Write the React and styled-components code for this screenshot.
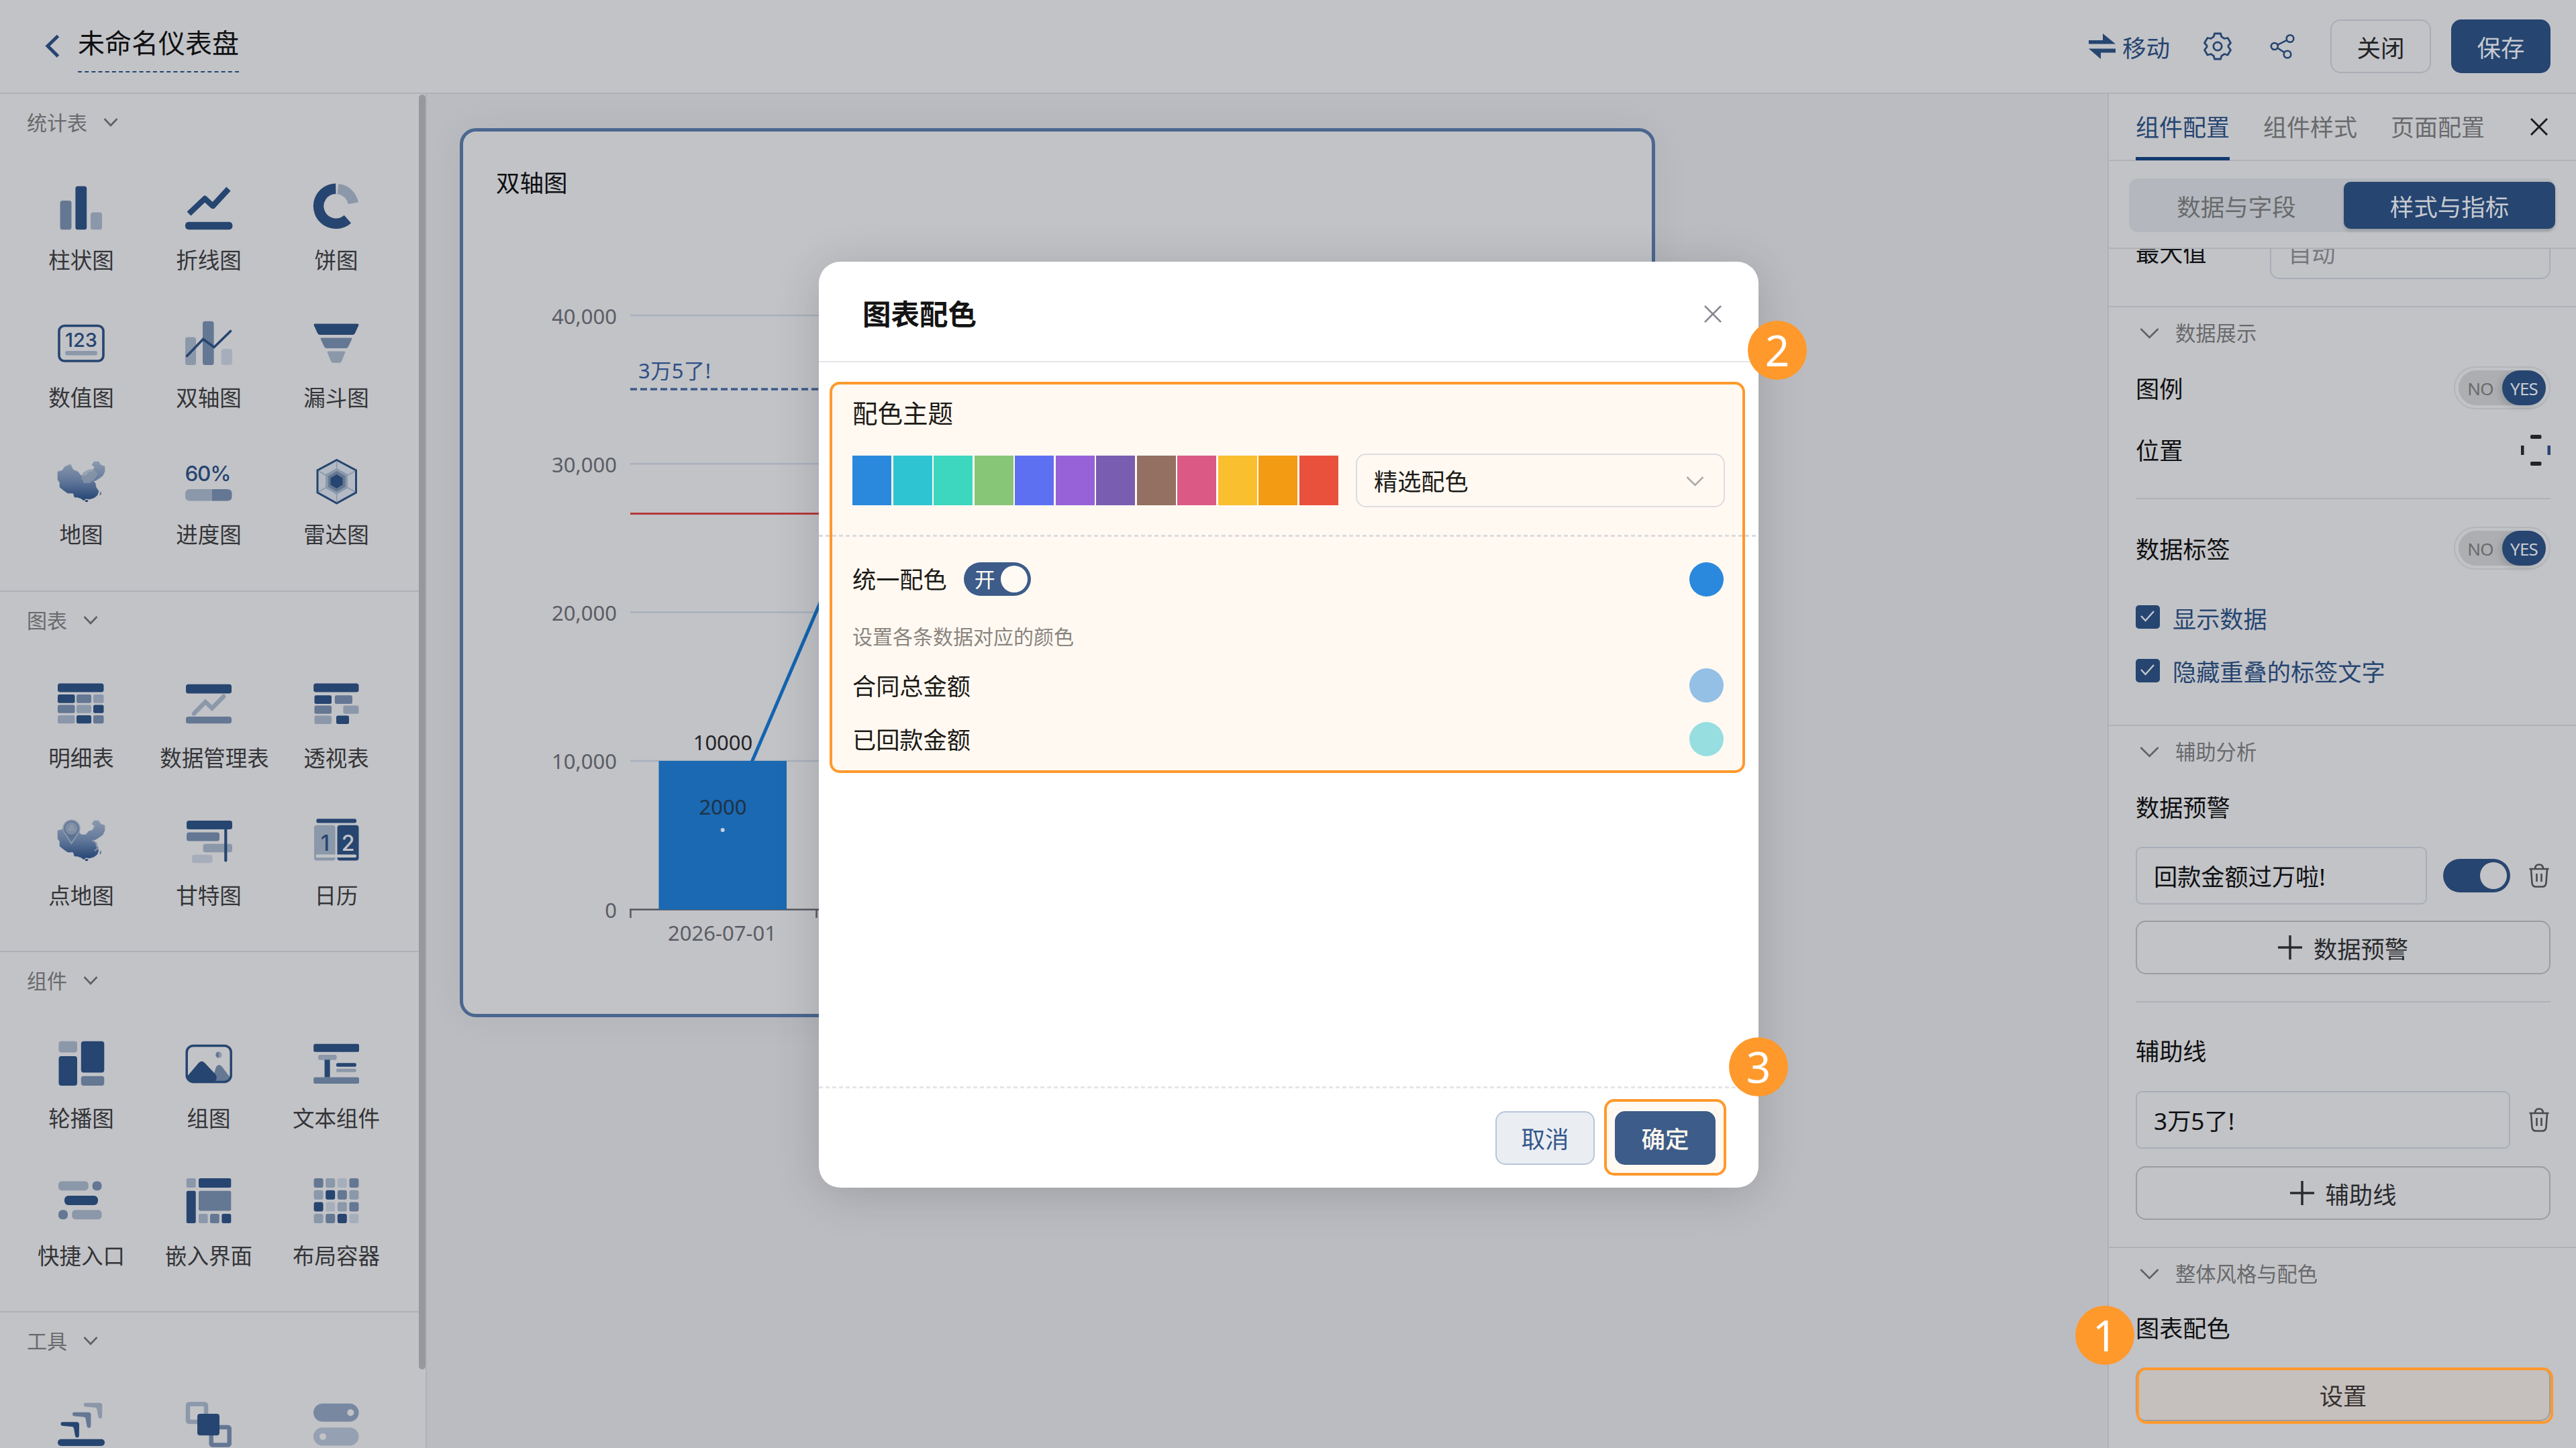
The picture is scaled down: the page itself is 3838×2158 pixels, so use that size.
import React from "react";
import styled, { createGlobalStyle } from "styled-components";

const c = {
  panel: "#c2c3c7",
  canvas: "#bbbcc1",
  line: "#b0b1b6",
  navy: "#264570",
  mid: "#647793",
  light: "#8b98aa",
  faint: "#a7aebb",
  text: "#0f1012",
  label: "#343538",
  muted: "#696a6c",
  orange: "#ff992c",
  primary: "#3d5c89",
};

const Global = createGlobalStyle`
  html, body { margin: 0; padding: 0; }
  body {
    width: 3838px;
    height: 2158px;
    overflow: hidden;
    background: ${c.canvas};
    font-family: "Noto Sans", "Noto Sans CJK SC", sans-serif;
    color: ${c.text};
  }
  *, *::before, *::after { box-sizing: border-box; }
  svg { display: block; flex: none; }
`;

/* ---------- shell ---------- */

const Page = styled.div`
  position: relative;
  width: 3838px;
  height: 2158px;
  display: flex;
  flex-direction: column;
  overflow: hidden;
`;

const TopBar = styled.header`
  height: 140px;
  flex: none;
  display: flex;
  align-items: center;
  padding: 0 38px 0 67px;
  background: ${c.panel};
  border-bottom: 2px solid ${c.line};
`;

const DashTitle = styled.div`
  margin-left: 27px;
  margin-bottom: 9px;
  height: 86px;
  font-size: 40px;
  line-height: 84px;
  border-bottom: 2px dashed ${c.navy};
`;

const DashTitleText = styled.span`
  display: block;
`;

const TopActions = styled.div`
  margin-left: auto;
  display: flex;
  align-items: center;
`;

const MoveLink = styled.div`
  display: flex;
  align-items: center;
  gap: 10px;
  margin-right: 50px;
  font-size: 35.500px;
  line-height: 44px;
  color: ${c.navy};
  span { padding-top: 3px; }
`;

const IconSlot = styled.div`
  margin-right: ${(p) => p.$gap}px;
`;

const TopButton = styled.div`
  width: ${(p) => p.$w}px;
  height: 80px;
  margin-left: ${(p) => p.$ml || 0}px;
  padding-top: 4px;
  display: flex;
  align-items: center;
  justify-content: center;
  border-radius: 15px;
  font-size: 35.500px;
  line-height: 44px;
  color: ${(p) => (p.$solid ? "#c6cad1" : "#222326")};
  background: ${(p) => (p.$solid ? c.navy : "transparent")};
  border: 2px solid ${(p) => (p.$solid ? c.navy : "#a9adb5")};
`;

const Main = styled.div`
  flex: 1;
  min-height: 0;
  display: flex;
`;

/* ---------- left library ---------- */

const Library = styled.aside`
  width: 636px;
  flex: none;
  display: flex;
  background: ${c.panel};
  border-right: 2px solid ${c.line};
  overflow: hidden;
`;

const LibraryList = styled.div`
  width: 624px;
  flex: none;
`;

const ScrollThumb = styled.div`
  width: 10px;
  height: 1900px;
  margin-top: 1px;
  border-radius: 5px;
  background: #97989c;
`;

const LibSection = styled.section`
  height: ${(p) => p.$h}px;
  overflow: hidden;
  border-top: ${(p) => (p.$first ? "0" : `2px solid ${c.line}`)};
`;

const LibHead = styled.div`
  height: 91px;
  padding: 0 0 6px 40px;
  display: flex;
  align-items: center;
  gap: 24px;
  font-size: 30px;
  line-height: 36px;
  color: ${c.muted};
`;

const LibGrid = styled.div`
  display: grid;
  grid-template-columns: repeat(3, 190px);
  grid-auto-rows: 204.5px;
  padding-left: 26px;
`;

const LibItem = styled.div`
  display: flex;
  flex-direction: column;
  align-items: center;
  padding-top: 38px;
  gap: 19px;
  font-size: 32.5px;
  line-height: 40px;
  color: ${c.label};
  white-space: nowrap;
`;

const LibLabel = styled.span`
  margin-left: ${(p) => (p.$long ? 17 : 0)}px;
`;

/* ---------- canvas ---------- */

const Canvas = styled.main`
  flex: 1;
  min-width: 0;
  padding: 51px 0 0 49px;
`;

const ChartCard = styled.div`
  width: 1781px;
  height: 1325px;
  border: 5px solid #4a678f;
  border-radius: 24px;
  background: ${c.panel};
  box-shadow: 0 0 60px rgba(0, 0, 0, 0.05);
`;

const ChartTitle = styled.div`
  padding: 54px 0 0 49px;
  height: 100px;
  font-size: 35.500px;
  line-height: 44px;
`;

/* ---------- right panel ---------- */

const Panel = styled.aside`
  width: 698px;
  flex: none;
  display: flex;
  flex-direction: column;
  background: ${c.panel};
  border-left: 2px solid ${c.line};
  overflow: hidden;
`;

const Tabs = styled.div`
  height: 100px;
  flex: none;
  display: flex;
  align-items: stretch;
  gap: 50px;
  padding: 0 42px 0 40px;
  border-bottom: 2px solid ${c.line};
`;

const Tab = styled.div`
  height: 99px;
  padding-top: 28px;
  font-size: 35px;
  line-height: 44px;
  white-space: nowrap;
  color: ${(p) => (p.$on ? c.navy : c.muted)};
  border-bottom: 5px solid ${(p) => (p.$on ? "#123a6e" : "transparent")};
`;

const TabClose = styled.div`
  margin-left: auto;
  display: flex;
  align-items: center;
`;

const SegmentWrap = styled.div`
  height: 131px;
  flex: none;
  padding: 26px 31px 0 30px;
  border-bottom: 2px solid ${c.line};
`;

const Segment = styled.div`
  height: 80px;
  display: flex;
  align-items: center;
  border-radius: 14px;
  background: #b4b8be;
`;

const SegmentItem = styled.div`
  width: ${(p) => (p.$on ? 315 : 320)}px;
  height: 70px;
  margin-top: -1px;
  padding-top: 4px;
  display: flex;
  align-items: center;
  justify-content: center;
  font-size: 35.500px;
  line-height: 44px;
  border-radius: 10px;
  color: ${(p) => (p.$on ? "#c6cad1" : c.muted)};
  background: ${(p) => (p.$on ? c.navy : "transparent")};
  box-shadow: ${(p) => (p.$on ? "0 3px 5px rgba(0,0,0,.16)" : "none")};
`;

const PanelBody = styled.div`
  flex: 1;
  min-height: 0;
  overflow: hidden;
  padding: 0 38px 0 40px;
`;

const Row = styled.div`
  display: flex;
  align-items: center;
  justify-content: ${(p) => p.$justify || "space-between"};
  height: ${(p) => p.$h}px;
  margin-top: ${(p) => p.$mt || 0}px;
  gap: ${(p) => p.$gap || 0}px;
  font-size: 35.200px;
  line-height: 40px;
`;

const RowText = styled.span`
  padding-top: ${(p) => p.$drop || 0}px;
  color: ${(p) => p.$color || c.text};
`;

const Rule = styled.div`
  height: 2px;
  margin: ${(p) => p.$mt}px ${(p) => (p.$full ? "-38px" : 0)} 0 ${(p) => (p.$full ? "-40px" : 0)};
  background: ${c.line};
`;

const GroupTitle = styled.div`
  height: 78px;
  padding-left: 6px;
  display: flex;
  align-items: center;
  gap: 24px;
  font-size: 30.300px;
  line-height: 36px;
  color: ${c.muted};
`;

const Field = styled.div`
  width: ${(p) => p.$w}px;
  height: ${(p) => p.$h || 86}px;
  display: flex;
  align-items: center;
  padding: 2px 26px 0 25px;
  border: 2px solid #a8aeb7;
  border-radius: ${(p) => p.$r || 9}px;
  color: ${(p) => p.$color || c.text};
`;

const GhostButton = styled.div`
  height: 80px;
  margin-top: ${(p) => p.$mt}px;
  display: flex;
  align-items: center;
  justify-content: center;
  gap: 17px;
  border: 2px solid #9c9da1;
  border-radius: 15px;
  font-size: 35.300px;
  line-height: 40px;
  color: #2a2b2e;
  span { padding-top: 4px; }
`;

const YesNo = styled.div`
  width: 144px;
  height: 64px;
  padding: 4px 5px;
  border: 2px solid #b4b5b9;
  border-radius: 32px;
`;

const YesNoTrack = styled.div`
  height: 52px;
  display: flex;
  align-items: center;
  border-radius: 26px;
  background: #adaeb2;
  font-size: 26px;
  line-height: 30px;
  letter-spacing: -0.8px;
  color: ${c.muted};
`;

const YesNoItem = styled.div`
  width: 66px;
  height: 52px;
  padding-top: 2px;
  display: flex;
  align-items: center;
  justify-content: center;
  border-radius: 26px;
  color: ${(p) => (p.$on ? "#c6cad1" : c.muted)};
  background: ${(p) => (p.$on ? c.navy : "transparent")};
  box-shadow: ${(p) => (p.$on ? "-4px 3px 10px rgba(0,0,0,.12)" : "none")};
`;

const CheckBox = styled.div`
  width: 36px;
  height: 35px;
  display: flex;
  align-items: center;
  justify-content: center;
  border-radius: 5px;
  background: ${c.navy};
`;

const Switch = styled.div`
  width: 100px;
  height: 50px;
  margin-right: ${(p) => p.$mr || 0}px;
  display: flex;
  align-items: center;
  justify-content: flex-end;
  gap: 8px;
  padding-right: 5px;
  border-radius: 25px;
  background: ${(p) => p.$bg};
  color: #fffaf3;
  font-size: 31px;
  line-height: 40px;
`;

const Knob = styled.i`
  width: 40px;
  height: 40px;
  border-radius: 50%;
  background: ${(p) => p.$bg};
`;

/* ---------- dialog ---------- */

const Dialog = styled.div`
  position: absolute;
  z-index: 0;
  left: 1220px;
  top: 390px;
  width: 1400px;
  height: 1380px;
  display: flex;
  flex-direction: column;
  border-radius: 32px;
  background: #fff;
  box-shadow: 0 10px 70px rgba(0, 0, 0, 0.16);
`;

const DialogHead = styled.div`
  height: 150px;
  display: flex;
  align-items: center;
  justify-content: space-between;
  padding: 8px 55px 0 65px;
  border-bottom: 2px solid #e4e5e7;
  font-size: 42.5px;
  font-weight: 700;
  line-height: 50px;
  color: #141414;
`;

const DialogSection = styled.div`
  padding: 0 50px;
  color: #1d1a16;
`;

const Heading = styled.div`
  padding-top: 56px;
  font-size: 37.5px;
  line-height: 40px;
`;

const Dashes = styled.div`
  height: 3px;
  margin-top: ${(p) => p.$mt}px;
  background: repeating-linear-gradient(90deg, ${(p) => p.$color} 0 6px, transparent 6px 10px);
`;

const Palette = styled.div`
  width: 724px;
  height: 74px;
  display: grid;
  grid-template-columns: repeat(12, 1fr);
  gap: 2.4px;
`;

const Swatch = styled.i`
  background: ${(p) => p.$bg};
`;

const Select = styled.div`
  width: 550px;
  height: 80px;
  display: flex;
  align-items: center;
  justify-content: space-between;
  padding: 2px 29px 0 25px;
  border: 2px solid #dcdcde;
  border-radius: 15px;
`;

const Hint = styled.div`
  margin-top: 46px;
  font-size: 30px;
  line-height: 30px;
  color: #8a857f;
`;

const Dot = styled.i`
  width: 51px;
  height: 51px;
  margin: 0 2px 0 auto;
  border-radius: 50%;
  background: ${(p) => p.$bg};
`;

const DialogFoot = styled.div`
  margin-top: auto;
  height: 151px;
`;

const FootButtons = styled.div`
  display: flex;
  justify-content: flex-end;
  gap: 30px;
  padding: 34px 64px 0 0;
`;

const FootButton = styled.div`
  width: ${(p) => (p.$solid ? 150 : 148)}px;
  height: 80px;
  padding-top: 2px;
  display: flex;
  align-items: center;
  justify-content: center;
  border-radius: 15px;
  font-size: 35.500px;
  line-height: 40px;
  font-weight: ${(p) => (p.$solid ? 500 : 400)};
  color: ${(p) => (p.$solid ? "#fff8ee" : "#34578a")};
  background: ${(p) => (p.$solid ? c.primary : "#eaeef3")};
  border: 2px solid ${(p) => (p.$solid ? c.primary : "#b8c6da")};
`;

/* ---------- walkthrough markers ---------- */

const Frame = styled.div`
  position: absolute;
  left: ${(p) => p.$x}px;
  top: ${(p) => p.$y}px;
  width: ${(p) => p.$w}px;
  height: ${(p) => p.$h}px;
  border: 4px solid ${c.orange};
  border-radius: 15px;
  background: ${(p) => (p.$tint ? "rgba(255, 153, 44, 0.06)" : "transparent")};
`;

const Tint = styled.div`
  position: absolute;
  z-index: -1;
  left: ${(p) => p.$x}px;
  top: ${(p) => p.$y}px;
  width: ${(p) => p.$w}px;
  height: ${(p) => p.$h}px;
  border-radius: 15px;
  background: #fff9f2;
`;

const Step = styled.div`
  position: absolute;
  left: ${(p) => p.$x}px;
  top: ${(p) => p.$y}px;
  width: 88px;
  height: 88px;
  display: flex;
  align-items: center;
  justify-content: center;
  border-radius: 50%;
  background: ${c.orange};
  color: #fff;
  font-size: 64px;
  line-height: 88px;
`;

/* ---------- icons ---------- */

const R = ({ x, y, x2, y2, f, r = 3.5 }) => (
  <rect x={x} y={y} width={x2 - x} height={y2 - y} rx={r} fill={f} />
);
const D = c.navy, M = c.mid, L = c.light, F = c.faint;

const Tile = ({ children }) => (
  <svg width="80" height="80" viewBox="0 0 80 80">{children}</svg>
);

const mapPath =
  "M5 25L12 23L15 18L19 16L24 14L28 22L35 25L40 31L47 31L51 26L57 24L60 18L56 15L59 10L66 10L69 15L75 17L75 25L72 31L68 34L62 38L58 39L61 42L62 48L66 54L64 60L59 64L52 66L47 65L44 68L40 65L34 63L30 63L28 57L20 57L14 53L8 48L8 41L5 37Z";

const ChinaMap = ({ id }) => (
  <>
    <defs>
      <linearGradient id={id} x1="0" y1="0" x2="0" y2="1">
        <stop offset="0" stopColor="#8b99ae" />
        <stop offset="0.5" stopColor="#61779a" />
        <stop offset="1" stopColor="#234472" />
      </linearGradient>
    </defs>
    <path d={mapPath} fill={`url(#${id})`} strokeLinejoin="round" stroke={`url(#${id})`} strokeWidth="0.6" />
    <ellipse cx="48" cy="68.6" rx="2.4" ry="1.6" fill={D} />
    <path d="M67.5 57l2-3 .6 4-2.4 3z" fill={M} />
  </>
);

const icons = {
  bar: <><R x={8.6} y={30} x2={25.5} y2={73.3} f={M} /><R x={31.4} y={8.5} x2={48.2} y2={73.3} f={D} /><R x={54} y={47.5} x2={71} y2={73.3} f={L} /></>,
  line: <><R x={5} y={61.7} x2={75.4} y2={73.3} f={D} r={5} /><path d="M10.500 49.500L34.200 27L46 38L69.500 12.500" fill="none" stroke={D} strokeWidth="8.5" strokeLinejoin="round" strokeLinecap="butt" /></>,
  pie: <><path d="M39.3 12.2A26 26 0 1 0 56.9 57.6" fill="none" stroke={D} strokeWidth="15.5" /><path d="M42.4 12.6A26 26 0 0 1 65.2 33.8" fill="none" stroke={L} strokeWidth="15.5" /></>,
  num: <><rect x="7" y="11.5" width="66" height="52.5" rx="8" fill="none" stroke={D} strokeWidth="3.6" /><text x="40" y="42.5" fontFamily="Inter, sans-serif" fontSize="29" fontWeight="500" fill={D} textAnchor="middle" textLength="48">123</text><R x={16} y={49} x2={64} y2={55.5} f={L} r={3} /></>,
  dual: <><R x={5} y={28.4} x2={21} y2={70} f={L} /><R x={31} y={4.8} x2={47.6} y2={70} f={M} /><R x={58.6} y={46} x2={75} y2={70} f={F} /><path d="M7.6 56.5L31.6 31.5L48 43.5L72.5 19.5" fill="none" stroke={D} strokeWidth="3.6" strokeLinecap="round" /></>,
  funnel: <><path d="M9 8.6H71Q74.5 8.6 73 11.5L68 22.5Q66.800 25 64 25H16Q13.200 25 12 22.500L7 11.500Q5.500 8.600 9 8.600Z" fill={D} /><path d="M19 29.500H61Q64.500 29.500 63 32L58 42.500Q56.800 45 54 45H26Q23.200 45 22 42.500L17 32Q15.500 29.500 19 29.500Z" fill={M} /><path d="M29 49.500H51Q54.500 49.500 53 52L48 64.500Q47 66.800 44.500 66.800H35.500Q33 66.800 32 64.500L27 52Q25.500 49.500 29 49.500Z" fill={L} /></>,
  map: <><ChinaMap id="map-a" /><path d="M42 27L50 22L58 21L65 28L60 36L53 42L44 42L40 34Z" fill={L} opacity="0.75" /></>,
  progress: <><text x="4.500" y="39" fontFamily="Inter, sans-serif" fontSize="31.500" fontWeight="500" fill={D} textLength="69">60%</text><path d="M12 51H45V68.500H12Q5 68.500 5 61.500V58Q5 51 12 51Z" fill={L} /><path d="M45 51H67.500Q74.500 51 74.500 58V61.500Q74.500 68.500 67.500 68.500H45Z" fill={M} /></>,
  radar: <><path d="M40.700 7.500L69.500 23V56L40.700 72L12 56V23Z" fill="#b3bac5" stroke={D} strokeWidth="3" /><path d="M40.700 9V70.500M13.500 24L68 55M68 24L13.500 55" stroke={L} strokeWidth="1.500" /><path d="M40.700 19.700L57 29V49.500L40.700 59L24 49.500V29Z" fill={L} /><path d="M40.700 24L53.500 31.500V47.500L40.700 55L28 47.500V31.500Z" fill={M} /><path d="M40.700 29L49.500 34.500V44.500L40.700 50L31.500 44.500V34.500Z" fill={D} /></>,
  table: <><R x={5} y={7.5} x2={73.5} y2={20.6} f={D} />{[[D, M, L], [M, L, D], [L, D, M]].map((row, j) => row.map((f, i) => <R key={`${i}${j}`} x={[5, 33, 58][i]} x2={[30.5, 55, 73.5][i]} y={[24, 39.6, 55][j]} y2={[36.8, 51.8, 67.3][j]} f={f} r={2.500} />))}</>,
  manage: <><R x={6} y={8.7} x2={74} y2={22.6} f={D} /><path d="M18 52.600L35 35L45 44.500L62 27" fill="none" stroke={L} strokeWidth="6.500" strokeLinecap="round" /><R x={6} y={57} x2={74} y2={67.3} f={M} /></>,
  pivot: <><R x={6.2} y={7.5} x2={73.5} y2={20.6} f={D} /><R x={7.5} y={25.3} x2={33} y2={38} f={D} r={2.500} /><R x={37.8} y={25.3} x2={64} y2={38} f={M} r={2.500} /><R x={7.5} y={40.6} x2={33} y2={52.800} f={M} r={2.500} /><R x={50.4} y={40.6} x2={73.5} y2={52.8} f={L} r={2.500} /><R x={7.5} y={55.4} x2={33} y2={68} f={L} r={2.500} /><R x={40} y={55.4} x2={59} y2={68} f={D} r={2.500} /></>,
  point: <><g transform="translate(0,-3)"><ChinaMap id="map-b" /></g><path d="M25.500 41L16.500 27A12.200 12.200 0 1 1 34.500 27Z" fill="#5c7394" stroke={L} strokeWidth="2" /><circle cx="25.500" cy="18.500" r="9.500" fill="#7d8da4" /><path d="M19 22L24 14L27 12L32 22Z" fill={L} /><path d="M56 36L62 40L65 48L60 52" fill="none" stroke={L} strokeWidth="2" /></>,
  gantt: <><R x={7} y={7} x2={75} y2={20} f={D} /><R x={7} y={24.5} x2={56} y2={37.5} f={M} /><R x={31.6} y={41.5} x2={75} y2={54.3} f={L} /><R x={15} y={57.7} x2={45.5} y2={70.3} f={F} /><R x={63.2} y={14} x2={67.4} y2={68.4} f={D} r={2} /></>,
  calendar: <><R x={10.4} y={4.3} x2={70} y2={10.6} f={D} r={2.500} /><R x={7} y={13.8} x2={38.6} y2={66.4} f={L} r={4} /><R x={41.5} y={13.8} x2={73.5} y2={66.4} f={D} r={4} /><text x="23.500" y="52" fontFamily="Inter, sans-serif" fontSize="32" fontWeight="500" fill={D} textAnchor="middle">1</text><text x="57.500" y="52" fontFamily="Inter, sans-serif" fontSize="32" fontWeight="500" fill={c.panel} textAnchor="middle">2</text><R x={9.6} y={57.500} x2={70} y2={62} f={c.panel} r={2} /></>,
  carousel: <><R x={6.5} y={3.7} x2={34} y2={20.6} f={L} r={4} /><R x={6.5} y={26} x2={34} y2={70} f={D} r={4} /><R x={39.8} y={3.7} x2={74.3} y2={50.5} f={D} r={4} /><R x={39.8} y={55.8} x2={74.3} y2={70} f={M} r={4} /></>,
  gallery: <><path d="M45 62L51 42Q55 36 60 42L72 58Q72 64 66 64H48Z" fill={M} /><path d="M8 56L25 36Q29.500 31.500 34 36L50 53Q54 59 49 64H14Q8 62 8 56Z" fill={D} /><circle cx="55" cy="24" r="4.600" fill={L} /><path d="M55 19.400A4.600 4.600 0 0 0 55 28.600Z" fill={M} /><rect x="7.200" y="10.400" width="66" height="54" rx="10" fill="none" stroke={D} strokeWidth="3.500" /></>,
  textBlock: <><R x={6.2} y={7.7} x2={74} y2={19.7} f={D} r={2.500} /><R x={13} y={24} x2={40.7} y2={31.8} f={L} r={3} /><R x={22.6} y={31.3} x2={30.6} y2={57.6} f={D} r={0} /><R x={40} y={36.2} x2={69.8} y2={41.8} f={D} r={2} /><R x={40} y={44.7} x2={69.8} y2={49.8} f={L} r={2} /><R x={6.2} y={57.6} x2={74} y2={67} f={M} r={2.500} /></>,
  quick: <><R x={6} y={7.6} x2={50.7} y2={21.200} f={L} r={5} /><R x={56.6} y={7.6} x2={70.5} y2={21.2} f={M} r={6} /><R x={15} y={29} x2={65} y2={43} f={D} r={6} /><R x={6} y={50.3} x2={20} y2={64.200} f={M} r={6} /><R x={26.3} y={50.3} x2={70.5} y2={64.2} f={L} r={5} /></>,
  embed: <><R x={6.8} y={3} x2={20.7} y2={17} f={L} r={2.500} /><R x={25} y={3} x2={73.3} y2={17} f={D} r={2.500} /><R x={6.8} y={21.8} x2={20.7} y2={70} f={D} r={2.500} /><R x={25} y={21.8} x2={73.3} y2={51.6} f={M} r={2.500} /><R x={25} y={56} x2={38.6} y2={70} f={L} r={2.500} /><R x={42} y={56} x2={55.8} y2={70} f={M} r={2.500} /><R x={59.4} y={56} x2={73.3} y2={70} f={D} r={2.500} /></>,
  container: <>{[[M, L, F, M], [L, D, M, L], [D, F, L, M], [L, M, D, F]].map((row, j) => row.map((f, i) => <R key={`${i}${j}`} x={6.6 + i * 17.6} x2={20.6 + i * 17.6} y={3 + j * 17.700} y2={17 + j * 17.7} f={f} r={3} />))}</>,
  steps: <>{[[L, 34.300, -28.500], [M, 17.500, -14.500], [D, 0, 0]].map(([f, x, y]) => <path key={f} transform={`translate(${x},${y})`} d="M12 34.300H33Q37 34.300 37 38.300L36.800 55Q36.500 57.500 34 57.500Q31.500 57.500 31 55L29 43.500Q28.500 41.500 26.500 41.200L12.500 40Q9.500 39.500 9.500 37.200Q9.500 34.500 12 34.300Z" fill={f} />)}<R x={5} y={59.7} x2={75} y2={70} f={D} r={5} /></>,
  layers: <><rect x="9" y="7.500" width="27" height="26.500" rx="2" fill="none" stroke={L} strokeWidth="6.500" /><rect x="43.700" y="42" width="27" height="26.500" rx="2" fill="none" stroke={M} strokeWidth="6.500" /><R x={23} y={22} x2={56} y2={54.3} f={D} r={4} /></>,
  toggles: <><R x={6} y={6.7} x2={73.5} y2={33.700} f="#7888a0" r={13.500} /><circle cx="61.300" cy="20.300" r="5" fill={c.panel} /><R x={6} y={42.4} x2={73.5} y2={69.500} f="#95a1b2" r={13.500} /><circle cx="20" cy="56" r="5" fill={c.panel} /></>,
};

const Chevron = ({ w = 24, h = 16, color = "#606164", sw = 2.600 }) => (
  <svg width={w} height={h} fill="none" stroke={color} strokeWidth={sw}>
    <path d={`M1.500 2L${w / 2} ${h - 3}L${w - 1.500} 2`} />
  </svg>
);

const Cross = ({ s, color, sw }) => (
  <svg width={s} height={s} stroke={color} strokeWidth={sw}>
    <path d={`M1 1L${s - 1} ${s - 1}M${s - 1} 1L1 ${s - 1}`} />
  </svg>
);

const Plus = () => (
  <svg width="36" height="36" stroke="#2a2b2e" strokeWidth="3.500">
    <path d="M0 18H36M18 0V36" />
  </svg>
);

const Trash = () => (
  <svg width="30" height="36" viewBox="0 0 30 36" fill="none" stroke="#4a4b4e" strokeWidth="2.600">
    <path d="M0.500 8H29.500M9 8C9 3.500 11 1.500 15 1.500S21 3.500 21 8M3 8L4.500 29C5 33 6.500 34.500 10 34.500H20C23.500 34.500 25 33 25.500 29L27 8M11.500 15V27M18.500 15V27" />
  </svg>
);

const Check = () => (
  <svg width="24" height="20" fill="none" stroke="#c2c6ce" strokeWidth="2.500">
    <path d="M2 9L8.500 16L21 2" />
  </svg>
);

const Gear = () => (
  <svg width="42" height="42" viewBox="0 0 42 42" fill="none" stroke={c.navy} strokeWidth="2.800" strokeLinejoin="round">
    <path d="M16.500 2H25.500L27 7Q29.500 8 31 9.500L36 8.500L40.500 16L37 20V22L40.500 26.500L36 34L31 32.500Q29.500 34 27 35L25.500 40H16.500L15 35Q12.500 34 11 32.500L6 34L1.500 26.500L5 22V20L1.500 16L6 8.500L11 9.500Q12.500 8 15 7Z" />
    <circle cx="21" cy="21" r="6.200" />
  </svg>
);

const Share = () => (
  <svg width="38" height="38" viewBox="0 0 38 38" fill="none" stroke={c.navy} strokeWidth="2.600">
    <circle cx="30" cy="7.500" r="5.300" />
    <circle cx="6.800" cy="19" r="5" />
    <circle cx="26" cy="31" r="5.300" />
    <path d="M11.300 16.800L25.300 9.800M11.200 21.500L21.500 28.200" />
  </svg>
);

const Swap = () => (
  <svg width="40" height="38" viewBox="0 0 40 38" fill={c.navy}>
    <path d="M0 10H21V0L40 15.500H0ZM40 22.500V28.500H18V38L0 22.500Z" />
  </svg>
);

/* ---------- data ---------- */

const library = [
  { title: "统计表", h: 740, items: [["bar", "柱状图"], ["line", "折线图"], ["pie", "饼图"], ["num", "数值图"], ["dual", "双轴图"], ["funnel", "漏斗图"], ["map", "地图"], ["progress", "进度图"], ["radar", "雷达图"]] },
  { title: "图表", h: 537, items: [["table", "明细表"], ["manage", "数据管理表"], ["pivot", "透视表"], ["point", "点地图"], ["gantt", "甘特图"], ["calendar", "日历"]] },
  { title: "组件", h: 537, items: [["carousel", "轮播图"], ["gallery", "组图"], ["textBlock", "文本组件"], ["quick", "快捷入口"], ["embed", "嵌入界面"], ["container", "布局容器"]] },
  { title: "工具", h: 204, items: [["steps", ""], ["layers", ""], ["toggles", ""]] },
];

const palette = ["#2a89dc", "#2fc4d1", "#3dd6bf", "#87c677", "#5d70f2", "#9762d8", "#795db1", "#937061", "#da5a85", "#fabf2f", "#f49b14", "#e9513c"];

const AxisChart = () => {
  const ticks = ["40,000", "30,000", "20,000", "10,000", "0"];
  return (
    <svg width="1771" height="1215" viewBox="690 296 1771 1215" fontFamily='"Noto Sans","Noto Sans CJK SC",sans-serif' fontSize="31">
      {ticks.map((t, i) => {
        const y = 470 + i * 221.300;
        return (
          <g key={t}>
            {i < 4 && <path d={`M939 ${y}H2400`} stroke="#a9b1bd" strokeWidth="2.500" />}
            <text x="919" y={y + 12.500} textAnchor="end" fill="#5b5d65">{t}</text>
          </g>
        );
      })}
      <path d="M939 580H2400" stroke="#3c5a8a" strokeWidth="3.500" strokeDasharray="10 5" />
      <text x="951" y="564" fill="#2d4f85" textLength="108">3万5了!</text>
      <path d="M939 765.500H2400" stroke="#b5393b" strokeWidth="2.800" />
      <path d="M938 1355.500H2400M939.500 1355V1368M1216.500 1355V1368" stroke="#555962" strokeWidth="2.500" fill="none" />
      <path d="M1076.700 1237L1354 590" stroke="#1465b1" strokeWidth="5" />
      <rect x="981.500" y="1134" width="190.500" height="221.500" fill="#1a69b2" />
      <circle cx="1076.700" cy="1237" r="3" fill="#c9d2dc" />
      <g textAnchor="middle">
        <text x="1077" y="1118" fill="#242528">10000</text>
        <text x="1077" y="1214" fill="#1e3247">2000</text>
        <text x="1076" y="1402" fill="#5b5d65">2026-07-01</text>
      </g>
    </svg>
  );
};

const YesNoToggle = () => (
  <YesNo>
    <YesNoTrack>
      <YesNoItem>NO</YesNoItem>
      <YesNoItem $on>YES</YesNoItem>
    </YesNoTrack>
  </YesNo>
);

export default function App() {
  return (
    <Page>
      <Global />
      <TopBar>
        <svg width="22" height="36" fill="none" stroke={c.navy} strokeWidth="5">
          <path d="M19.500 2.500L4 17.500L19.500 33" />
        </svg>
        <DashTitle><DashTitleText>未命名仪表盘</DashTitleText></DashTitle>
        <TopActions>
          <MoveLink><Swap /><span>移动</span></MoveLink>
          <IconSlot $gap={57}><Gear /></IconSlot>
          <IconSlot $gap={52}><Share /></IconSlot>
          <TopButton $w={150}>关闭</TopButton>
          <TopButton $w={148} $ml={30} $solid>保存</TopButton>
        </TopActions>
      </TopBar>

      <Main>
        <Library>
          <LibraryList>
            {library.map((s, i) => (
              <LibSection key={s.title} $h={s.h} $first={i === 0}>
                <LibHead>{s.title}<Chevron w={22} h={15} /></LibHead>
                <LibGrid>
                  {s.items.map(([icon, label]) => (
                    <LibItem key={icon}>
                      <Tile>{icons[icon]}</Tile>
                      <LibLabel $long={label.length > 4}>{label}</LibLabel>
                    </LibItem>
                  ))}
                </LibGrid>
              </LibSection>
            ))}
          </LibraryList>
          <ScrollThumb />
        </Library>

        <Canvas>
          <ChartCard>
            <ChartTitle>双轴图</ChartTitle>
            <AxisChart />
          </ChartCard>
        </Canvas>

        <Panel>
          <Tabs>
            <Tab $on>组件配置</Tab>
            <Tab>组件样式</Tab>
            <Tab>页面配置</Tab>
            <TabClose><Cross s={26} color="#1c1d1f" sw={3} /></TabClose>
          </Tabs>
          <SegmentWrap>
            <Segment>
              <SegmentItem>数据与字段</SegmentItem>
              <SegmentItem $on>样式与指标</SegmentItem>
            </Segment>
          </SegmentWrap>
          <PanelBody>
            <Row $h={80} $mt={-35}>
              <RowText>最大值</RowText>
              <Field $w={418} $h={80} $r={14} $color="#77787c">自动</Field>
            </Row>
            <Rule $mt={40} $full />
            <GroupTitle><Chevron w={29} h={18} />数据展示</GroupTitle>
            <Row $h={64} $mt={10}><RowText $drop={2}>图例</RowText><YesNoToggle /></Row>
            <Row $h={64} $mt={29}>
              <RowText>位置</RowText>
              <svg width="44" height="46" fill="#232427">
                <rect x="14" y="0" width="16.500" height="6" rx="2" />
                <rect x="14" y="40" width="16.500" height="6" rx="2" />
                <rect x="0" y="16" width="4.500" height="14" />
                <rect x="39.500" y="16" width="4.500" height="14" fill={c.navy} />
              </svg>
            </Row>
            <Rule $mt={39} />
            <Row $h={64} $mt={41}><RowText $drop={2}>数据标签</RowText><YesNoToggle /></Row>
            <Row $h={36} $mt={52} $gap={19} $justify="flex-start">
              <CheckBox><Check /></CheckBox><RowText $drop={5} $color={c.navy}>显示数据</RowText>
            </Row>
            <Row $h={36} $mt={44} $gap={19} $justify="flex-start">
              <CheckBox><Check /></CheckBox><RowText $drop={4} $color={c.navy}>隐藏重叠的标签文字</RowText>
            </Row>
            <Rule $mt={63} $full />
            <GroupTitle><Chevron w={29} h={18} />辅助分析</GroupTitle>
            <Row $h={40} $mt={22}><RowText $drop={1}>数据预警</RowText></Row>
            <Row $h={86} $mt={40}>
              <Field $w={434}>回款金额过万啦!</Field>
              <Switch $bg={c.navy} $mr={4}><Knob $bg={c.panel} /></Switch>
              <IconSlot $gap={2}><Trash /></IconSlot>
            </Row>
            <GhostButton $mt={24}><Plus /><span>数据预警</span></GhostButton>
            <Rule $mt={40} />
            <Row $h={40} $mt={51}><RowText $drop={1}>辅助线</RowText></Row>
            <Row $h={86} $mt={41}>
              <Field $w={558}>3万5了!</Field>
              <IconSlot $gap={2}><Trash /></IconSlot>
            </Row>
            <GhostButton $mt={26}><Plus /><span>辅助线</span></GhostButton>
            <Rule $mt={40} $full />
            <GroupTitle><Chevron w={29} h={18} />整体风格与配色</GroupTitle>
            <Row $h={40} $mt={20}><RowText $drop={2}>图表配色</RowText></Row>
            <GhostButton $mt={40}><span>设置</span></GhostButton>
          </PanelBody>
        </Panel>
      </Main>

      <Dialog>
        <Tint $x={16} $y={179} $w={1364} $h={583} />
        <Tint $x={1170} $y={1248} $w={182} $h={114} />
        <DialogHead>
          图表配色
          <Cross s={26} color="#85888f" sw={2.500} />
        </DialogHead>
        <DialogSection>
          <Heading>配色主题</Heading>
          <Row $h={80} $mt={40}>
            <Palette>{palette.map((p) => <Swatch key={p} $bg={p} />)}</Palette>
            <Select>精选配色<Chevron w={27} h={17} color="#adaba8" /></Select>
          </Row>
        </DialogSection>
        <Dashes $mt={41} $color="#dcdbda" />
        <DialogSection>
          <Row $h={50} $mt={38} $gap={25}>
            <RowText $color="inherit">统一配色</RowText>
            <Switch $bg={c.primary}>开<Knob $bg="#fffaf4" /></Switch>
            <Dot $bg="#2a89dc" />
          </Row>
          <Hint>设置各条数据对应的颜色</Hint>
          <Row $h={52} $mt={31}><RowText $drop={2} $color="inherit">合同总金额</RowText><Dot $bg="#94c0e6" /></Row>
          <Row $h={52} $mt={28}><RowText $drop={2} $color="inherit">已回款金额</RowText><Dot $bg="#96dee0" /></Row>
        </DialogSection>
        <DialogFoot>
          <Dashes $mt={0} $color="#e6e6e8" />
          <FootButtons>
            <FootButton>取消</FootButton>
            <FootButton $solid>确定</FootButton>
          </FootButtons>
        </DialogFoot>
      </Dialog>

      <Frame $x={1236} $y={569} $w={1364} $h={583} />
      <Frame $x={2390} $y={1638} $w={182} $h={114} />
      <Frame $tint $x={3183} $y={2038} $w={621} $h={84} />
      <Step $x={3092} $y={1946}>1</Step>
      <Step $x={2604} $y={478}>2</Step>
      <Step $x={2576} $y={1546}>3</Step>
    </Page>
  );
}
